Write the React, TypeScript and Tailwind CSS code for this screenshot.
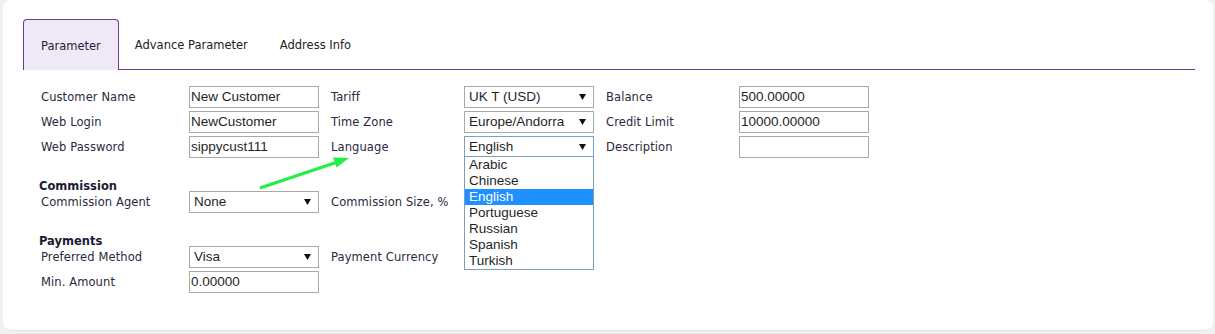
const labelCls = "text-[11.5px] text-[#2a2840] tracking-[0.1px] pt-[2px]";
const boxText = "text-[13.5px] text-[#1f1f1f] font-['Liberation_Sans',Arial,sans-serif]";

function TextBox({ value }: { value: string }) {
  return (
    <div className={`w-[130px] h-[22px] border border-[#a9a9a9] bg-white pl-[1px] flex items-center ${boxText}`}>
      {value}
    </div>
  );
}

function Caret() {
  return (
    <svg width="7" height="6" viewBox="0 0 7 6" className="absolute right-[7px] top-[7px]">
      <polygon points="0,0 7,0 3.5,6" fill="#111" />
    </svg>
  );
}

function SelectBox({ value, focused }: { value: string; focused?: boolean }) {
  return (
    <div
      className={`relative w-[130px] h-[22px] border bg-white pl-[4px] flex items-center ${boxText} ${
        focused ? "border-[#7a9fd0]" : "border-[#a9a9a9]"
      }`}
    >
      {value}
      <Caret />
    </div>
  );
}

const languages = ["Arabic", "Chinese", "English", "Portuguese", "Russian", "Spanish", "Turkish"];

function LanguageList() {
  return (
    <div className="absolute left-0 top-[20px] w-[130px] border border-[#7f9db9] bg-white z-10">
      {languages.map((lang) => (
        <div
          key={lang}
          className={`h-[16px] leading-[16px] pl-[4px] ${boxText} ${
            lang === "English" ? "bg-[#1e90ff] text-white" : ""
          }`}
        >
          {lang}
        </div>
      ))}
    </div>
  );
}

function Label({ text, w }: { text: string; w: string }) {
  return <div className={`${labelCls} ${w} shrink-0`}>{text}</div>;
}

export default function App() {
  return (
    <div
      className="relative w-[1215px] h-[334px] bg-[#f0f0f0] pl-[3px] pr-[2px]"
      style={{ fontFamily: '"DejaVu Sans", Verdana, sans-serif' }}
    >
      <div className="h-[331px] bg-white rounded-[8px] border-b border-[#e4e4e4] pt-[19px] pl-[20px] pr-[18px]">
        {/* tabs */}
        <div className="flex items-end h-[51px] border-b border-[#6a3d9a]">
          <div className="h-[51px] -mb-[1px] px-[17px] border border-b-0 border-[#6a3d9a] rounded-t-[4px] bg-[#efe8f6] flex items-center pt-[3px] text-[11.5px] text-[#1f1f3a]">
            Parameter
          </div>
          <div className="h-[50px] px-[16px] pt-[3px] flex items-center text-[11.5px] text-[#222]">Advance Parameter</div>
          <div className="h-[50px] px-[16px] pt-[3px] flex items-center text-[11.5px] text-[#222]">Address Info</div>
        </div>

        {/* form */}
        <div className="pl-[18px] pt-[16px]">
          <div className="flex flex-col gap-[3px]">
            <div className="flex items-center h-[22px]">
              <Label text="Customer Name" w="w-[148px]" />
              <TextBox value="New Customer" />
              <Label text="Tariff" w="w-[133px] ml-[12px]" />
              <SelectBox value="UK T (USD)" />
              <Label text="Balance" w="w-[133px] ml-[12px]" />
              <TextBox value="500.00000" />
            </div>
            <div className="flex items-center h-[22px]">
              <Label text="Web Login" w="w-[148px]" />
              <TextBox value="NewCustomer" />
              <Label text="Time Zone" w="w-[133px] ml-[12px]" />
              <SelectBox value="Europe/Andorra" />
              <Label text="Credit Limit" w="w-[133px] ml-[12px]" />
              <TextBox value="10000.00000" />
            </div>
            <div className="flex items-center h-[22px]">
              <Label text="Web Password" w="w-[148px]" />
              <TextBox value="sippycust111" />
              <Label text="Language" w="w-[133px] ml-[12px]" />
              <div className="relative">
                <SelectBox value="English" focused />
                <LanguageList />
              </div>
              <Label text="Description" w="w-[133px] ml-[12px]" />
              <TextBox value="" />
            </div>
          </div>

          <div className="mt-[20px] -ml-[2px] h-[13px] leading-[17px] text-[11.5px] font-bold text-[#1a1a33]">
            Commission
          </div>
          <div className="flex items-center h-[22px]">
            <Label text="Commission Agent" w="w-[148px]" />
            <SelectBox value="None" />
            <Label text="Commission Size, %" w="w-[133px] ml-[12px]" />
          </div>

          <div className="mt-[20px] -ml-[2px] h-[13px] leading-[17px] text-[11.5px] font-bold text-[#1a1a33]">
            Payments
          </div>
          <div className="flex flex-col gap-[3px]">
            <div className="flex items-center h-[22px]">
              <Label text="Preferred Method" w="w-[148px]" />
              <SelectBox value="Visa" />
              <Label text="Payment Currency" w="w-[133px] ml-[12px]" />
            </div>
            <div className="flex items-center h-[22px]">
              <Label text="Min. Amount" w="w-[148px]" />
              <TextBox value="0.00000" />
            </div>
          </div>
        </div>
      </div>

      {/* annotation arrow */}
      <svg className="absolute left-[255px] top-[150px]" width="100" height="45" viewBox="0 0 100 45">
        <line x1="5" y1="38" x2="81" y2="12.5" stroke="#22ee44" strokeWidth="3" />
        <polygon points="94,8 81.6,17.6 78,7.4" fill="#22ee44" />
      </svg>
    </div>
  );
}
